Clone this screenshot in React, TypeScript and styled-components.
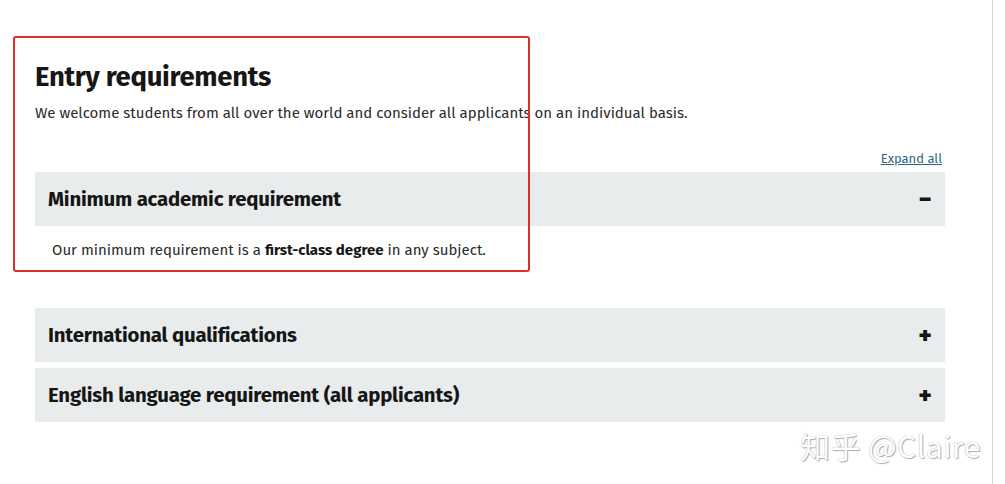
import React from 'react';
import styled, { createGlobalStyle } from 'styled-components';

const GlobalStyle = createGlobalStyle`
  body {
    margin: 0;
    background: #fff;
    font-family: "Fira Sans", "Noto Sans", "Liberation Sans", sans-serif;
    color: #1d1d1d;
  }
`;

const Page = styled.div`
  position: relative;
  width: 993px;
  min-height: 484px;
  border-right: 1px solid #d4d4d4;
  box-sizing: border-box;
  padding: 59px 0 0 35px;
`;

const Content = styled.section`
  width: 910px;
`;

const Title = styled.h2`
  margin: 0;
  font-size: 27.5px;
  line-height: 36px;
  font-weight: 700;
  color: #161616;
  letter-spacing: -0.3px;
`;

const Lead = styled.p`
  margin: 7px 0 0;
  font-size: 15px;
  line-height: 22px;
  color: #2b2b2b;
`;

const ExpandRow = styled.div`
  display: flex;
  justify-content: flex-end;
  margin: 26px 0 4px;
  padding-right: 3px;
`;

const ExpandLink = styled.a`
  font-size: 13px;
  line-height: 18px;
  color: #2b6689;
  text-decoration: underline;
  cursor: pointer;
`;

const Accordion = styled.div`
  display: flex;
  flex-direction: column;
`;

const Item = styled.div<{ $gapAfter: number }>`
  margin-bottom: ${p => p.$gapAfter}px;
`;

const Header = styled.div`
  display: flex;
  align-items: center;
  justify-content: space-between;
  height: 54px;
  padding: 0 13px;
  background: #e8ecec;
`;

const HeaderTitle = styled.span`
  font-size: 20.4px;
  font-weight: 700;
  color: #161616;
  letter-spacing: -0.2px;
`;

const Toggle = styled.span`
  font-size: 24px;
  font-weight: 900;
  color: #161616;
  line-height: 1;
  width: 14px;
  text-align: center;
`;

const Body = styled.div`
  padding: 15px 17px 0;
  font-size: 15px;
  line-height: 18px;
  color: #2b2b2b;
  b {
    color: #161616;
  }
`;

const Highlight = styled.div`
  position: absolute;
  left: 13px;
  top: 36px;
  width: 517px;
  height: 236px;
  box-sizing: border-box;
  border: 2px solid #d8312a;
  border-radius: 3px;
  pointer-events: none;
`;

const Watermark = styled.div`
  position: absolute;
  left: 800px;
  top: 423px;
  font-family: "Noto Sans CJK SC", "Noto Sans", sans-serif;
  font-size: 30px;
  color: #fff;
  text-shadow: 0 0 1px #9a9a9a, 1px 1px 1px #b0b0b0;
  letter-spacing: 0.5px;
`;

const items = [
  { title: 'Minimum academic requirement', open: true, gap: 49 },
  { title: 'International qualifications', open: false, gap: 6 },
  { title: 'English language requirement (all applicants)', open: false, gap: 0 },
];

export default function App() {
  return (
    <>
      <GlobalStyle />
      <Page>
        <Content>
          <Title>Entry requirements</Title>
          <Lead>
            We welcome students from all over the world and consider all applicants on an individual basis.
          </Lead>
          <ExpandRow>
            <ExpandLink>Expand all</ExpandLink>
          </ExpandRow>
          <Accordion>
            {items.map(item => (
              <Item key={item.title} $gapAfter={item.gap}>
                <Header>
                  <HeaderTitle>{item.title}</HeaderTitle>
                  <Toggle>{item.open ? '−' : '+'}</Toggle>
                </Header>
                {item.open && (
                  <Body>
                    Our minimum requirement is a <b>first-class degree</b> in any subject.
                  </Body>
                )}
              </Item>
            ))}
          </Accordion>
        </Content>
        <Highlight />
        <Watermark>知乎 @Claire</Watermark>
      </Page>
    </>
  );
}
